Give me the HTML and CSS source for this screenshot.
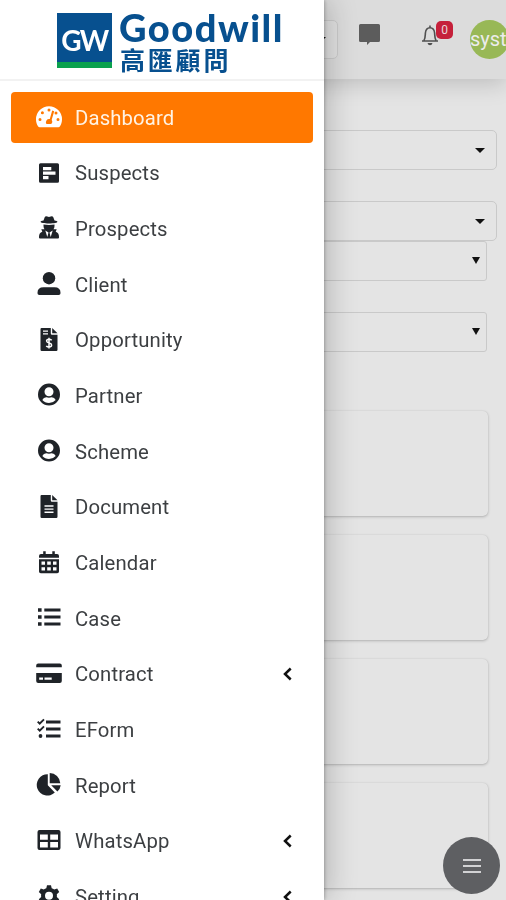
FILE: index.html
```html
<!DOCTYPE html>
<html lang="en">
<head>
    <meta charset="UTF-8">
    <meta name="viewport" content="width=device-width, initial-scale=1.0">
    <title>Goodwill</title>
    <link rel="stylesheet" href="styles.css">
</head>
<body>
    <header class="topbar">
        <div class="lang-select"><span class="caret"></span></div>
        <svg class="icon-chat" viewBox="0 0 22 21"><path d="M1.500 0h18q1.500 0 1.500 1.500v15q0 1.500-1.500 1.500h-8.500l-3 3v-3h-6.500q-1.500 0-1.500-1.500v-15q0-1.500 1.500-1.500z"/></svg>
        <div class="notify">
            <svg viewBox="0 0 18 21"><path d="M9 0.500v2M1 16h16M3 15.500c1.300-2 1.200-4.500 1.400-7.500C4.700 4.500 6.300 2.700 9 2.700s4.300 1.800 4.600 5.300c.2 3 .1 5.500 1.400 7.500" fill="none" stroke="currentColor" stroke-width="1.600"/><path d="M6.500 18h5q-.5 2.300-2.500 2.300t-2.500-2.300z"/></svg>
            <span class="badge">0</span>
        </div>
        <div class="avatar">syst</div>
    </header>

    <main class="content">
        <div class="field"><span class="caret"></span></div>
        <div class="field second"><span class="caret"></span></div>
        <div class="field narrow"><span class="caret"></span></div>
        <div class="field narrow last"><span class="caret"></span></div>

        <div class="card"></div>
        <div class="card"></div>
        <div class="card"></div>
        <div class="card"></div>
    </main>

    <button class="fab" aria-label="Menu"><span></span><span></span><span></span></button>

    <aside class="sidebar">
        <div class="brand">
            <div class="logo">GW</div>
            <div class="brand-text">
                <span class="brand-name">Goodwill</span>
                <span class="brand-cn">高匯顧問</span>
            </div>
        </div>

        <nav class="menu">
            <a class="item active">
                <svg viewBox="0 0 26 24"><path fill-rule="evenodd" d="M13 1.300A13 13 0 0 0 0 14.300c0 2.600.7 5 2 7 .4.600.9.900 1.600.900h18.800c.7 0 1.200-.300 1.600-.900 1.300-2 2-4.400 2-7a13 13 0 0 0-13-13zM13 3.400a1.500 1.500 0 1 1 0 3 1.500 1.500 0 0 1 0-3zM6.400 6.300a1.500 1.500 0 1 1 0 3 1.500 1.500 0 0 1 0-3zM4 13a1.500 1.500 0 1 1 0 3 1.500 1.500 0 0 1 0-3zM22 13a1.500 1.500 0 1 1 0 3 1.500 1.500 0 0 1 0-3zM20 6.600a1.500 1.500 0 1 1 0 3 1.500 1.500 0 0 1 0-3zM16.200 5.600l2 .6-2.500 8.600a3.300 3.300 0 0 1-.4 4.200h-4.900a3.300 3.300 0 0 1 3.400-5z"/></svg>
                <span>Dashboard</span>
            </a>
            <a class="item">
                <svg viewBox="0 0 26 24"><path fill-rule="evenodd" d="M4.500 2.300h17q1.500 0 1.500 1.500v16.500q0 1.500-1.500 1.500h-17q-1.500 0-1.500-1.500v-16.500q0-1.500 1.500-1.500zM7 6v3.200h8.300v-3.200zM7 10.500v3.200h12.500v-3.200zM7 15v3.200h5.500v-3.200z"/></svg>
                <span>Suspects</span>
            </a>
            <a class="item">
                <svg viewBox="0 0 26 24"><path d="M8.700 1.200Q9.500-.1 11.300.6q1.700.7 3.400 0 1.800-.7 2.600.6l1.200 3.300q3 .6 3 1.300c0 1-3.500 1.700-8.500 1.700s-8.500-.7-8.500-1.700q0-.7 3-1.300z"/><path fill-rule="evenodd" d="M7.500 8.500q5.500.8 11 0v1.500q0 1.800-1 3.300h3.200l-1 2.500q3.300 1.200 3.300 5v.7q0 1-1 1h-18q-1 0-1-1v-.7q0-3.800 3.300-5l-1-2.500h3.200q-1-1.500-1-3.300zM9.300 14.500l2 6.500 1.200-4.500zM16.700 14.500l-2 6.500-1.200-4.500z"/></svg>
                <span>Prospects</span>
            </a>
            <a class="item">
                <svg viewBox="0 0 26 24"><circle cx="13" cy="6.200" r="6.200"/><path d="M7.500 15.200h11q6 0 6 5.500v.5q0 1.800-1.800 1.800h-19.400q-1.800 0-1.800-1.800v-.5q0-5.500 6-5.500z"/></svg>
                <span>Client</span>
            </a>
            <a class="item">
                <svg viewBox="0 0 26 24"><path fill-rule="evenodd" d="M5.500 0h9.300v5.500q0 1.200 1.200 1.200h5.500v15q0 1.200-1.200 1.200h-14.600q-1.200 0-1.200-1.200v-20.500q0-1.200 1-1.200zM7 2.500v1.200h5v-1.200zM7 5.200v1.200h5v-1.200z"/><path d="M16.200 0l5.300 5.300h-5.300z"/><path d="M15.700 12.200q-1-.9-2.700-.9-2.400 0-2.400 1.800c0 2.500 5 1.300 5 3.900q0 2-2.600 2-1.700 0-2.800-1M13 9.800v10.800" fill="none" stroke="#fff" stroke-width="1.500"/></svg>
                <span>Opportunity</span>
            </a>
            <a class="item">
                <svg viewBox="0 0 26 24"><path fill-rule="evenodd" d="M13 .5a11 11 0 1 0 0 22 11 11 0 0 0 0-22zM13 4.300a4.500 4.500 0 1 1 0 9 4.500 4.500 0 0 1 0-9zM6.300 17q1.200-2.500 4-2.700 2.700.9 5.400 0 2.800.2 4 2.700-2.600 3-6.700 3t-6.700-3z"/></svg>
                <span>Partner</span>
            </a>
            <a class="item">
                <svg viewBox="0 0 26 24"><path fill-rule="evenodd" d="M13 .5a11 11 0 1 0 0 22 11 11 0 0 0 0-22zM13 4.300a4.500 4.500 0 1 1 0 9 4.500 4.500 0 0 1 0-9zM6.300 17q1.200-2.500 4-2.700 2.700.9 5.400 0 2.800.2 4 2.700-2.600 3-6.700 3t-6.700-3z"/></svg>
                <span>Scheme</span>
            </a>
            <a class="item">
                <svg viewBox="0 0 26 24"><path fill-rule="evenodd" d="M5.500 0h9.300v5.500q0 1.200 1.200 1.200h5.500v15q0 1.200-1.200 1.200h-14.600q-1.200 0-1.200-1.200v-20.500q0-1.200 1-1.200zM8.500 10.300v1.400h9v-1.400zM8.500 13.400v1.400h9v-1.400zM8.500 16.500v1.400h9v-1.400z"/><path d="M16.200 0l5.300 5.300h-5.300z"/></svg>
                <span>Document</span>
            </a>
            <a class="item">
                <svg viewBox="0 0 26 24"><path fill-rule="evenodd" d="M7.200.3h2.500v2.700h6.600v-2.700h2.500v2.700h2.200q2 0 2 2v1.800h-20v-1.800q0-2 2-2h2.200zM3 8.300h20v12.200q0 1.800-1.800 1.800h-16.400q-1.800 0-1.800-1.800zM5.500 10.500v3.300h3.500v-3.300zM11.200 10.500v3.300h3.600v-3.300zM17 10.500v3.300h3.500v-3.300zM5.500 16.200v3.300h3.500v-3.300zM11.200 16.200v3.300h3.600v-3.300zM17 16.200v3.300h3.500v-3.300z"/></svg>
                <span>Calendar</span>
            </a>
            <a class="item">
                <svg viewBox="0 0 26 24"><path d="M2 2.200h3.600v3.600h-3.600zM2 9.200h3.600v3.600h-3.600zM2 16.200h3.600v3.600h-3.600zM8.300 2.600h16.200v2.800h-16.200zM8.300 9.600h16.200v2.800h-16.200zM8.300 16.600h16.200v2.800h-16.200z"/></svg>
                <span>Case</span>
            </a>
            <a class="item parent">
                <svg viewBox="0 0 26 24"><path fill-rule="evenodd" d="M2.200 1.500h21.600q2 0 2 2v1.700h-25.600v-1.700q0-2 2-2zM.2 11h25.600v8q0 2-2 2h-21.600q-2 0-2-2zM3.200 15.500v2.300h3.800v-2.300zM8.500 15.500v2.300h7.200v-2.300z"/></svg>
                <span>Contract</span>
                <svg class="arrow" viewBox="0 0 9 14"><path d="M7.700 1.500L2 7l5.700 5.500"/></svg>
            </a>
            <a class="item">
                <svg viewBox="0 0 26 24"><path d="M10 2.600h14.500v2.800h-14.500zM10 9.600h14.500v2.800h-14.500zM10 16.600h14.500v2.800h-14.500z"/><circle cx="4.500" cy="18" r="1.900"/><path d="M1.700 3.600l2 2L8 1.300M1.700 10.600l2 2L8 8.300" fill="none" stroke="currentColor" stroke-width="1.900"/></svg>
                <span>EForm</span>
            </a>
            <a class="item">
                <svg viewBox="0 0 26 24"><path d="M11.800 1.200v11l7 7.300a10.600 10.700 0 1 1-7-18.300zM13.700 0a11 11 0 0 1 10.600 10.300h-10.600zM15.200 12.200h9.500q-.5 4-3.300 6.400z"/></svg>
                <span>Report</span>
            </a>
            <a class="item parent">
                <svg viewBox="0 0 26 24"><path fill-rule="evenodd" d="M3.500 1h19q2 0 2 2v16q0 2-2 2h-19q-2 0-2-2v-16q0-2 2-2zM4 5.600v5.200h7.800v-5.200zM14.200 5.600v5.200h7.800v-5.200zM4 13v5.400h7.800v-5.400zM14.200 13v5.400h7.800v-5.400z"/></svg>
                <span>WhatsApp</span>
                <svg class="arrow" viewBox="0 0 9 14"><path d="M7.700 1.500L2 7l5.700 5.500"/></svg>
            </a>
            <a class="item parent">
                <svg viewBox="0 0 26 24"><path fill-rule="evenodd" d="M11 .3h4l.7 3q1.300.5 2.500 1.300l3-1 2 3.500-2.400 2.200q.3 1.500 0 2.800l2.400 2.200-2 3.500-3-1q-1.200.9-2.500 1.400l-.7 3h-4l-.7-3q-1.300-.5-2.500-1.400l-3 1-2-3.500 2.400-2.200q-.3-1.300 0-2.800l-2.400-2.200 2-3.500 3 1q1.200-.8 2.500-1.300zM13 6.800a4 4 0 1 0 0 8 4 4 0 0 0 0-8z"/></svg>
                <span>Setting</span>
                <svg class="arrow" viewBox="0 0 9 14"><path d="M7.700 1.500L2 7l5.700 5.500"/></svg>
            </a>
        </nav>
    </aside>
</body>
</html>
```
FILE: styles.css
```css
* {
    box-sizing: border-box;
    padding: 0;
    margin: 0;
}

body {
    width: 100%;
    height: 900px;
    overflow: hidden;
    background-color: #e4e4e4;
    font-family: Roboto, "Liberation Sans", sans-serif;
}

/* top bar */
.topbar {
    height: 79px;
    padding-left: 240px;
    display: flex;
    align-items: flex-start;
    background-color: #dcdcdc;
    box-shadow: 0 4px 22px rgba(0, 0, 0, 0.18);
}

.lang-select {
    width: 98px;
    height: 39px;
    margin-top: 20px;
    padding-right: 11px;
    border: 1px solid #cbcbcb;
    border-radius: 5px;
    background-color: #e1e1e1;
    display: flex;
    align-items: center;
    justify-content: flex-end;
    flex-shrink: 0;
}

.icon-chat {
    width: 22px;
    height: 21px;
    margin: 24px 0 0 21px;
    fill: #5c5c5c;
    flex-shrink: 0;
}

.notify {
    display: flex;
    margin: 21px 0 0 40px;
    color: #505050;
    flex-shrink: 0;
}

.notify svg {
    width: 18px;
    height: 21px;
    margin-top: 4px;
    fill: currentColor;
}

.badge {
    width: 17px;
    height: 18px;
    margin-left: -3px;
    border-radius: 5px;
    background-color: #c5203a;
    color: #e8d5d8;
    font-size: 12px;
    line-height: 18px;
    text-align: center;
}

.avatar {
    width: 39px;
    height: 39px;
    margin: 20px 0 0 17px;
    border-radius: 50%;
    background-color: #98b856;
    color: #ececec;
    font-size: 20px;
    line-height: 39px;
    flex-shrink: 0;
}

/* page content */
.content {
    padding: 51px 18px 0 18px;
}

.field {
    height: 40px;
    margin-right: -9px;
    padding-right: 11px;
    border: 1px solid #c9c9c9;
    border-radius: 5px;
    display: flex;
    align-items: center;
    justify-content: flex-end;
}

.field.second {
    margin-top: 31px;
}

.field.narrow {
    margin-right: 1px;
    padding-right: 6px;
    border-radius: 3px;
}

.field.last {
    margin-top: 31px;
}

.caret {
    border: 5px solid transparent;
    border-top: 5px solid #111;
    border-bottom: 0;
}

.narrow .caret {
    margin-top: -2px;
    border-width: 7px 4px 0 4px;
}

.card {
    height: 105px;
    margin-bottom: 19px;
    border-radius: 5px;
    box-shadow: 0 0 1px rgba(0, 0, 0, 0.12), 0 1px 3px rgba(0, 0, 0, 0.22);
    background-color: #e4e4e4;
}

.last + .card {
    margin-top: 59px;
}

.fab {
    position: fixed;
    left: 443px;
    top: 837px;
    width: 57px;
    height: 57px;
    border: 0;
    border-radius: 50%;
    background-color: #5e5f62;
    display: flex;
    flex-direction: column;
    align-items: center;
    justify-content: center;
    gap: 4px;
}

.fab span {
    width: 18px;
    height: 2px;
    background-color: #d2d2d4;
}

/* side menu */
.sidebar {
    position: fixed;
    top: 0;
    left: 0;
    width: 324px;
    height: 900px;
    background-color: #fff;
    box-shadow: 0 0 4px rgba(0, 0, 0, 0.35), 4px 0 28px rgba(0, 0, 0, 0.22);
}

.brand {
    height: 81px;
    padding: 13px 0 0 57px;
    border-bottom: 2px solid #f2f2f2;
    display: flex;
}

.logo {
    width: 55px;
    height: 55px;
    border-bottom: 6px solid #0aa14e;
    background-color: #07508f;
    color: #fff;
    font-family: Lato, sans-serif;
    font-size: 28px;
    font-weight: bold;
    letter-spacing: -1.5px;
    line-height: 54px;
    text-align: center;
}

.brand-text {
    margin-left: 7px;
    color: #07508f;
    display: flex;
    flex-direction: column;
    white-space: nowrap;
}

.brand-name {
    height: 34px;
    font-family: Lato, sans-serif;
    font-size: 38px;
    font-weight: 900;
    letter-spacing: 1.5px;
    line-height: 29px;
}

.brand-cn {
    margin-left: 1px;
    font-family: "Noto Sans CJK TC", sans-serif;
    font-size: 25px;
    font-weight: bold;
    letter-spacing: 2.8px;
    line-height: 25px;
}

.menu {
    padding: 11px 11px 0 11px;
    display: flex;
    flex-direction: column;
    gap: 4.700px;
}

.item {
    height: 51px;
    padding: 0 21px 0 25px;
    border-radius: 4px;
    color: #3c3f42;
    display: flex;
    align-items: center;
    gap: 13px;
    font-size: 20.300px;
    letter-spacing: 0.15px;
    flex-shrink: 0;
}

.item svg {
    width: 26px;
    height: 24px;
    margin-top: -1px;
    color: #1f2328;
    fill: currentColor;
}

.item.active {
    background-color: #ff7800;
    color: #fff3e4;
}

.item.active svg {
    margin-top: -2px;
    color: #fff;
}

.item svg.arrow {
    width: 9px;
    height: 14px;
    margin-left: auto;
    fill: none;
    stroke: #111;
    stroke-width: 2.500;
}
```
